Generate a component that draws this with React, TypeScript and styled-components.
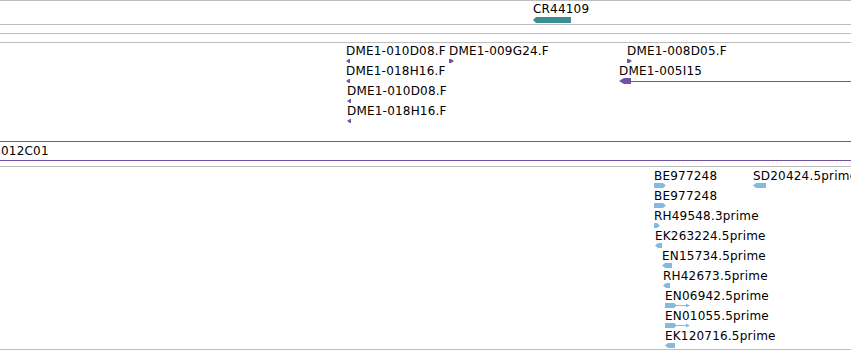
import React from 'react'
import styled, { createGlobalStyle } from 'styled-components'

const colors = {
	rule: '#bdbdbd',
	teal: '#3b8e91',
	purple: '#7152a6',
	blue: '#84b9e2',
	text: '#000000',
}

type Dir = 'l' | 'r'
type GlyphSpec =
	| { kind: 'arrow'; dir: Dir; w: number; h: number }
	| { kind: 'long'; w: number }
	| { kind: 'split'; w: number }

type Feature = { x: number; label: string; glyph: GlyphSpec }

const GlobalStyle = createGlobalStyle`
	html, body {
		margin: 0;
		padding: 0;
		background: #ffffff;
		overflow: hidden;
	}
	body {
		font-family: 'DejaVu Sans', 'Liberation Sans', sans-serif;
		font-size: 12px;
		color: ${colors.text};
	}
`

const Panel = styled.div`
	width: 851px;
	height: 350px;
	display: flex;
	flex-direction: column;
	overflow: hidden;
`

const Track = styled.div<{ $h: number; $pad?: number }>`
	position: relative;
	height: ${(p) => p.$h}px;
	padding-top: ${(p) => p.$pad ?? 0}px;
	box-sizing: border-box;
	border-top: 1px solid ${colors.rule};
	flex: none;
`

const BottomRule = styled.div`
	height: 0;
	border-top: 1px solid ${colors.rule};
	flex: none;
`

const Row = styled.div`
	position: relative;
	height: 20px;
`

const FeatureBox = styled.div<{ $x: number }>`
	position: absolute;
	left: ${(p) => p.$x}px;
	top: 0;
	display: flex;
	flex-direction: column;
	align-items: flex-start;
`

const Label = styled.span`
	line-height: 14px;
	height: 14px;
	letter-spacing: 0.2px;
	white-space: nowrap;
`

const GlyphSlot = styled.div<{ $gap: number; $h: number }>`
	margin-top: ${(p) => p.$gap}px;
	height: ${(p) => p.$h}px;
	display: flex;
	align-items: center;

	svg {
		display: block;
	}
`

const CloneBox = styled.div`
	height: 20px;
	box-sizing: border-box;
	border-top: 1px solid ${colors.purple};
	border-bottom: 1px solid ${colors.purple};
	padding-left: 1px;
	line-height: 18px;
	letter-spacing: 0.2px;
	white-space: nowrap;
`

const CloneTrack = styled.div`
	height: 25px;
	flex: none;
`

const Glyph = ({ spec, color }: { spec: GlyphSpec; color: string }) => {
	if (spec.kind === 'long') {
		return (
			<svg width={spec.w} height={6}>
				<polygon points="0,3 5,0 12,0 12,6 5,6" fill={color} />
				<line x1={12} y1={3.5} x2={spec.w} y2={3.5} stroke={color} strokeWidth={1} />
			</svg>
		)
	}
	if (spec.kind === 'split') {
		return (
			<svg width={spec.w} height={5}>
				<polygon points="0,0 9,0 12,2.5 9,5 0,5" fill={color} />
				<line x1={12} y1={2.5} x2={spec.w - 2} y2={2.5} stroke={color} strokeWidth={1} />
				<polygon points={`${spec.w - 4},0.5 ${spec.w},2.5 ${spec.w - 4},4.5`} fill={color} />
			</svg>
		)
	}
	const { w, h, dir } = spec
	const tip = Math.min(3, w - 1)
	const pts =
		dir === 'r'
			? `0,0 ${w - tip},0 ${w},${h / 2} ${w - tip},${h} 0,${h}`
			: `${w},0 ${tip},0 0,${h / 2} ${tip},${h} ${w},${h}`
	return (
		<svg width={w} height={h}>
			<polygon points={pts} fill={color} />
		</svg>
	)
}

const FeatureItem = ({
	f,
	color,
	gap,
	slot,
}: {
	f: Feature
	color: string
	gap: number
	slot: number
}) => (
	<FeatureBox $x={f.x}>
		<Label>{f.label}</Label>
		<GlyphSlot $gap={gap} $h={slot}>
			<Glyph spec={f.glyph} color={color} />
		</GlyphSlot>
	</FeatureBox>
)

const small = (dir: Dir, w = 4): GlyphSpec => ({ kind: 'arrow', dir, w, h: 4 })
const est = (dir: Dir, w: number): GlyphSpec => ({ kind: 'arrow', dir, w, h: 5 })

const cloneEnds: Feature[][] = [
	[
		{ x: 346, label: 'DME1-010D08.F', glyph: small('l') },
		{ x: 449, label: 'DME1-009G24.F', glyph: small('r', 5) },
		{ x: 627, label: 'DME1-008D05.F', glyph: small('r', 5) },
	],
	[
		{ x: 346, label: 'DME1-018H16.F', glyph: small('l') },
		{ x: 619, label: 'DME1-005I15', glyph: { kind: 'long', w: 240 } },
	],
	[{ x: 347, label: 'DME1-010D08.F', glyph: small('l') }],
	[{ x: 347, label: 'DME1-018H16.F', glyph: small('l') }],
]

const ests: Feature[][] = [
	[
		{ x: 654, label: 'BE977248', glyph: est('r', 12) },
		{ x: 753, label: 'SD20424.5prime', glyph: est('l', 13) },
	],
	[{ x: 654, label: 'BE977248', glyph: est('r', 12) }],
	[{ x: 654, label: 'RH49548.3prime', glyph: est('r', 6) }],
	[{ x: 655, label: 'EK263224.5prime', glyph: est('l', 7) }],
	[{ x: 662, label: 'EN15734.5prime', glyph: est('l', 10) }],
	[{ x: 663, label: 'RH42673.5prime', glyph: est('l', 7) }],
	[{ x: 665, label: 'EN06942.5prime', glyph: { kind: 'split', w: 25 } }],
	[{ x: 665, label: 'EN01055.5prime', glyph: { kind: 'split', w: 25 } }],
	[{ x: 665, label: 'EK120716.5prime', glyph: est('l', 10) }],
]

const App = () => (
	<>
		<GlobalStyle />
		<Panel>
			<Track $h={24} $pad={1}>
				<Row>
					<FeatureItem
						f={{ x: 533, label: 'CR44109', glyph: { kind: 'arrow', dir: 'l', w: 38, h: 6 } }}
						color={colors.teal}
						gap={1}
						slot={6}
					/>
				</Row>
			</Track>
			<Track $h={9} />
			<Track $h={9} />
			<Track $h={99} $pad={1}>
				{cloneEnds.map((row, i) => (
					<Row key={i}>
						{row.map((f) => (
							<FeatureItem key={f.label + f.x} f={f} color={colors.purple} gap={0} slot={6} />
						))}
					</Row>
				))}
			</Track>
			<CloneTrack>
				<CloneBox>012C01</CloneBox>
			</CloneTrack>
			<Track $h={183} $pad={2}>
				{ests.map((row, i) => (
					<Row key={i}>
						{row.map((f) => (
							<FeatureItem key={f.label + f.x} f={f} color={colors.blue} gap={0} slot={5} />
						))}
					</Row>
				))}
			</Track>
			<BottomRule />
		</Panel>
	</>
)

export default App
